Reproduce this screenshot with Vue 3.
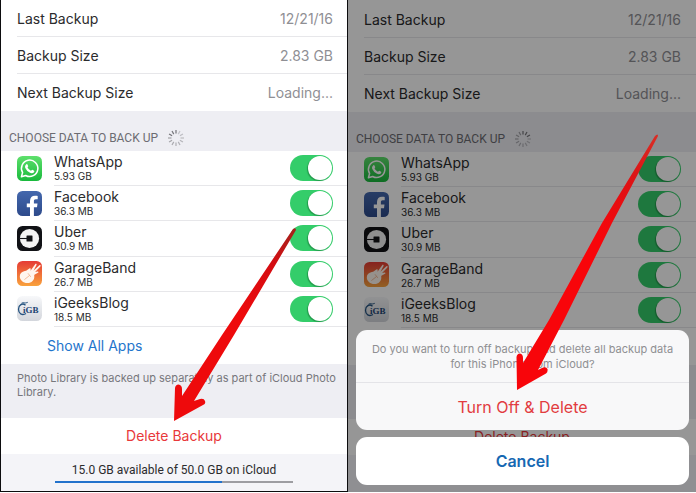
<script setup>
const details = [
  { label: 'Last Backup', value: '12/21/16' },
  { label: 'Backup Size', value: '2.83 GB' },
  { label: 'Next Backup Size', value: 'Loading...' },
]
const apps = [
  { id: 'whatsapp', name: 'WhatsApp', size: '5.93 GB' },
  { id: 'facebook', name: 'Facebook', size: '36.3 MB' },
  { id: 'uber', name: 'Uber', size: '30.9 MB' },
  { id: 'garageband', name: 'GarageBand', size: '26.7 MB' },
  { id: 'igeeks', name: 'iGeeksBlog', size: '18.5 MB' },
]
const screens = [
  { id: 'before', sheet: false, spin: 0 },
  { id: 'confirm', sheet: true, spin: 60 },
]
const spokes = Array.from({ length: 12 }, (_, i) => i)
const usedShare = 70
</script>

<template>
  <main class="board">
    <section v-for="s in screens" :key="s.id" class="screen" :class="s.id">
      <dl class="details">
        <div v-for="d in details" :key="d.label" class="detail">
          <dt>{{ d.label }}</dt>
          <dd>{{ d.value }}</dd>
        </div>
      </dl>
      <h2 class="heading">
        <span>CHOOSE DATA TO BACK UP</span>
        <svg class="spinner" viewBox="-9 -9 18 18" aria-hidden="true">
          <line v-for="i in spokes" :key="i" x1="0" y1="-4.5" x2="0" y2="-8"
            :transform="`rotate(${i * 30 + s.spin})`" :stroke-opacity="i > 9 || i === 0 ? 0.9 : 0.3 + i * 0.03" />
        </svg>
      </h2>
      <ul class="apps">
        <li v-for="a in apps" :key="a.id" class="app">
          <svg v-if="a.id === 'whatsapp'" class="icon" viewBox="0 0 25 25" aria-hidden="true">
            <defs><linearGradient :id="s.id + '-wa'" x2="0" y2="1"><stop stop-color="#5ee06c" /><stop offset="1" stop-color="#18b93c" /></linearGradient></defs>
            <rect width="25" height="25" rx="5.5" :fill="`url(#${s.id}-wa)`" />
            <path d="M4.4 20.8l1.2-4.3a8.2 8.2 0 1 1 3.1 3z" fill="none" stroke="#fff" stroke-width="1.5" stroke-linejoin="round" />
            <path d="M9.2 8.4c.6-.6 1.1-.4 1.4.3l.6 1.4c.2.5-.7 1.1-.6 1.5.7 1.4 1.8 2.5 3.3 3.1.4.1 1-1.1 1.5-.9l1.7.9c.5.3.2 1.3-.3 1.8-1.1 1-2.7.8-4.2.1a9.6 9.6 0 0 1-4.3-4.6c-.5-1.4-.2-2.7.9-3.6z" fill="#fff" />
          </svg>
          <svg v-else-if="a.id === 'facebook'" class="icon" viewBox="0 0 25 25" aria-hidden="true">
            <defs><linearGradient :id="s.id + '-fb'" x2="0" y2="1"><stop stop-color="#4468ad" /><stop offset="1" stop-color="#2d4a8b" /></linearGradient></defs>
            <rect width="25" height="25" rx="5.5" :fill="`url(#${s.id}-fb)`" />
            <path d="M13 25v-8.8H9.8v-3.7H13V10c0-3.400 2-5.200 5-5.200 1.300 0 2.200.1 2.700.2v3.200h-1.900c-1.500 0-1.900.8-1.900 1.900v2.400h3.600l-.5 3.700h-3.100V25z" fill="#fff" />
          </svg>
          <svg v-else-if="a.id === 'uber'" class="icon" viewBox="0 0 25 25" aria-hidden="true">
            <rect width="25" height="25" rx="5.5" fill="#111216" />
            <circle cx="12.5" cy="12.5" r="9.6" fill="#f4f4f4" />
            <rect x="9.5" y="9.5" width="6" height="6" rx=".5" fill="#111216" />
            <path d="M2.5 12.500H10" stroke="#111216" stroke-width="1.1" />
          </svg>
          <svg v-else-if="a.id === 'garageband'" class="icon" viewBox="0 0 25 25" aria-hidden="true">
            <defs><linearGradient :id="s.id + '-gb'" x2="0" y2="1"><stop stop-color="#e53b35" /><stop offset="1" stop-color="#f9a23c" /></linearGradient></defs>
            <rect width="25" height="25" rx="5.5" :fill="`url(#${s.id}-gb)`" />
            <path d="M2.800 15.300c0-2.700 2.200-4.700 5-5.200 2-.3 3-1.800 4.600-2.600.8-.4 1.400.1 1.300.8l-.2 1.500 4.700-6.600c.6-.8 1.800 0 1.300.9l-3 5.600 5.900-5.400c.8-.6 1.700.3 1 1.100l-5.300 5.600 2.400-.6c1-.2 1.300.9.5 1.400l-3.200 1.700c-.6.3-.6.9-.5 1.700.3 3.700-2.700 6.900-6.800 6.900-4.500 0-7.700-2.900-7.700-6.800z" fill="#fff6ee" />
            <path d="M7.400 18.600l5.400-4.300M11 12.300l2.800 3.600" stroke="#f3b087" stroke-width=".8" />
          </svg>
          <svg v-else class="icon" viewBox="0 0 25 25" aria-hidden="true">
            <defs><linearGradient :id="s.id + '-ig'" x2="0" y2="1"><stop stop-color="#f7f8fa" /><stop offset="1" stop-color="#d3d6dc" /></linearGradient></defs>
            <rect width="25" height="25" rx="5.5" :fill="`url(#${s.id}-ig)`" />
            <path d="M8.500 9.200C5.500 6.500 1.500 9 1.500 13.200s3.500 6.800 7.500 4.300" fill="none" stroke="#24527f" stroke-width="1.3" />
            <path d="M4.500 7.200c1.500-1.500 3.500.8 6.300-.9" fill="none" stroke="#24527f" stroke-width=".9" />
            <text x="6" y="17" class="mono">iGB</text>
          </svg>
          <label class="app-label" :for="`${s.id}-${a.id}`">
            <span class="name">{{ a.name }}</span>
            <span class="size">{{ a.size }}</span>
          </label>
          <input :id="`${s.id}-${a.id}`" class="toggle" type="checkbox" role="switch" checked>
        </li>
      </ul>
      <div class="more"><a href="#">Show All Apps</a></div>
      <p class="note">Photo Library is backed up separately as part of iCloud Photo Library.</p>
      <button class="delete" type="button">Delete Backup</button>
      <footer class="storage">
        <span>15.0 GB available of 50.0 GB on iCloud</span>
        <div class="meter"><div class="used" :style="{ width: usedShare + '%' }"></div></div>
      </footer>
      <div v-if="s.sheet" class="overlay" role="dialog" aria-label="Turn off backup">
        <div class="sheet">
          <p class="message">Do you want to turn off backup and delete all backup data for this iPhone from iCloud?</p>
          <button class="confirm-action" type="button">Turn Off &amp; Delete</button>
        </div>
        <button class="cancel" type="button">Cancel</button>
      </div>
    </section>
    <svg class="arrows" viewBox="0 0 696 493" aria-hidden="true">
      <defs>
        <linearGradient id="arrow-a" gradientUnits="userSpaceOnUse" x1="294" y1="228" x2="240" y2="315"><stop stop-color="#a3231c" /><stop offset=".4" stop-color="#d40d12" /><stop offset="1" stop-color="#ee0a0c" /></linearGradient>
        <linearGradient id="arrow-b" gradientUnits="userSpaceOnUse" x1="657" y1="135" x2="600" y2="240"><stop stop-color="#d92d25" /><stop offset=".4" stop-color="#dc1315" /><stop offset="1" stop-color="#f8050a" /></linearGradient>
      </defs>
      <path fill="url(#arrow-a)" d="M174 421L175 388Q175.500 384.500 178.500 384.500Q182 385 182 389L182 396L222 335L293 229Q296 227 296 230L234 335L194 401L200 399Q204 398 205 401Q206 404 203 405Z" />
      <path fill="url(#arrow-b)" d="M517 390L516.500 357Q517 353.500 520 353.500Q523 354 523 358L523 363L549 320L602 223L655 136Q658 133 658 136L612 223L564 320L538 370L542 368Q546 366 547.500 369Q548 372 546 373.500Z" />
    </svg>
  </main>
</template>

<style>
body { margin: 0; background: #fff; }
</style>

<style scoped>
.board { position: relative; display: grid; grid-template-columns: 1fr 1fr; font-family: Inter, "Liberation Sans", sans-serif; color: #2b2b2d; }
.screen { --pad-right: 14px; position: relative; display: flex; flex-direction: column; background: #fff; box-sizing: border-box; }
.before { border: solid #0c0c0e; border-width: 0 1px 1px; }
.confirm { --pad-right: 15px; padding-top: 1px; overflow: hidden; }
dl, dd, ul, p, h2 { margin: 0; padding: 0; }
ul { list-style: none; }
button { font: inherit; border: 0; padding: 0; cursor: pointer; }
.details { padding-left: 16px; }
.detail { display: flex; justify-content: space-between; align-items: center; box-sizing: border-box; height: 37px; padding: 1px var(--pad-right) 0 0; border-bottom: 1px solid #e7e7ea; font-size: 14px; line-height: 20px; }
.detail:last-child { border-bottom: 0; }
dd { color: #8f8f94; }
.heading { display: flex; align-items: center; gap: 9px; height: 40px; padding: 13px 0 0 8px; box-sizing: border-box; background: #eeeef3; color: #6c6c72; font-family: Roboto, sans-serif; font-size: 12px; font-weight: 400; line-height: 16px; }
.spinner { width: 18px; height: 18px; stroke: #67676c; stroke-width: 1.2; }
.apps { display: grid; grid-auto-rows: 1fr; min-height: 176px; }
.app { position: relative; display: flex; align-items: center; gap: 12px; padding: 0 var(--pad-right) 1px 16px; }
.app::after { content: ""; position: absolute; left: 53px; right: 0; bottom: 0; height: 1px; background: #e7e7ea; }
.icon { width: 25px; height: 25px; flex: none; }
.mono { font: bold 9px "Liberation Serif", serif; fill: #1d4473; }
.app-label { flex: 1; display: flex; flex-direction: column; }
.name { font-size: 14px; line-height: 16px; }
.size { font-size: 10px; line-height: 12px; }
.toggle { appearance: none; width: 43px; height: 26px; margin: 0; border-radius: 13px; background: #34cd6a; display: flex; justify-content: flex-end; padding: 1px; box-sizing: border-box; }
.toggle::before { content: ""; width: 24px; height: 24px; border-radius: 50%; background: #fff; box-shadow: -1px 1px 1px rgba(0, 60, 20, .35); }
.more { display: flex; align-items: center; height: 37px; padding-left: 46px; font-size: 14px; line-height: 20px; }
.more a { color: #1f75cc; text-decoration: none; }
.note { min-height: 54px; box-sizing: border-box; padding: 7px 8px 0 16px; background: #eeeef3; color: #77777c; font-size: 11px; line-height: 14px; }
.delete { height: 36px; background: #fff; color: #e8383a; font-size: 14px; line-height: 20px; }
.storage { display: flex; flex-direction: column; align-items: center; gap: 3px; height: 37px; padding-top: 8px; box-sizing: border-box; background: #f4f4f8; font-family: Roboto, sans-serif; font-size: 12px; line-height: 16px; }
.meter { width: 69%; height: 2px; background: #9d9da2; }
.used { height: 2px; background: #2272cc; }
.overlay { position: absolute; inset: 0; display: flex; flex-direction: column; justify-content: flex-end; gap: 7px; padding: 0 7px 7px 8px; background: rgba(0, 0, 0, .41); }
.sheet { display: flex; flex-direction: column; border-radius: 11px; overflow: hidden; background: #f8f8f9; }
.message { padding: 12px 8px 10px; color: #8f8f92; font-size: 11px; line-height: 15px; text-align: center; border-bottom: 1px solid #e4e4e8; }
.confirm-action { height: 47px; background: transparent; color: #e23c3f; font-size: 16px; line-height: 22px; }
.cancel { height: 48px; border-radius: 11px; background: #fff; color: #1668b3; font-size: 16px; font-weight: 600; line-height: 22px; }
.arrows { position: absolute; top: 0; left: 0; width: 100%; pointer-events: none; }
</style>
